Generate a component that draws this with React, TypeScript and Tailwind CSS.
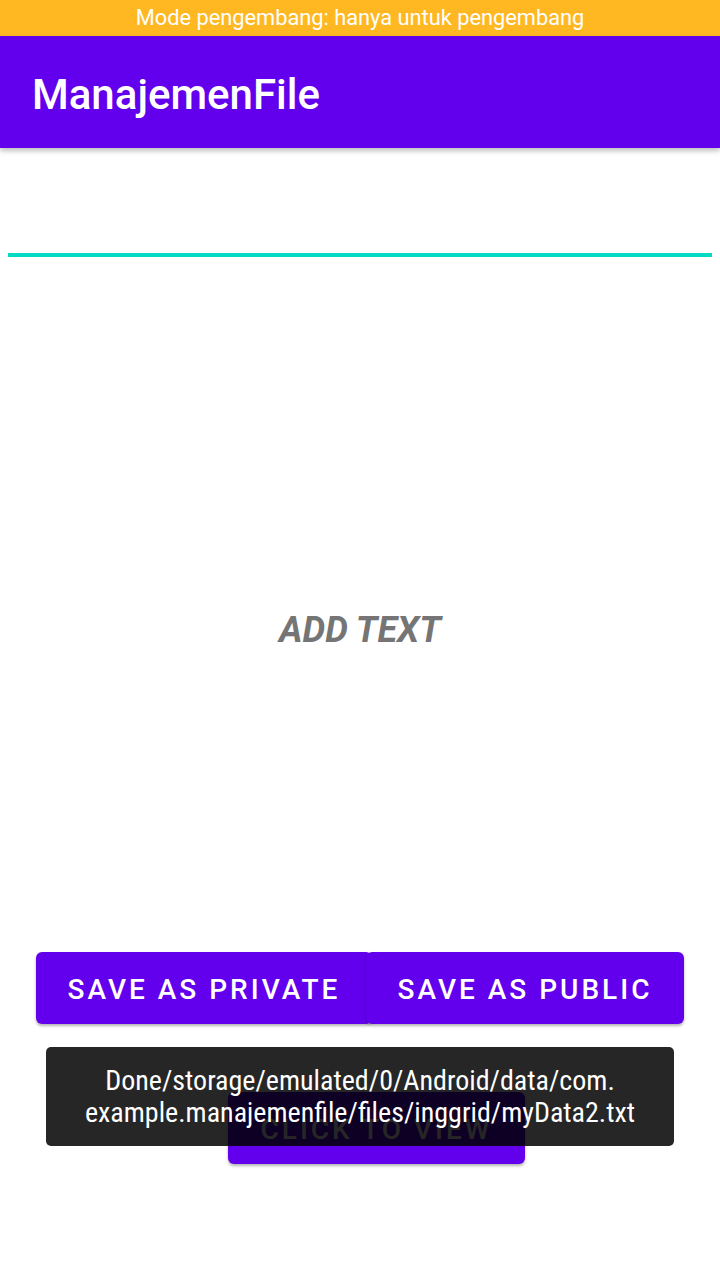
export default function App() {
  return (
    <div className="relative flex h-[1280px] w-[720px] flex-col overflow-hidden bg-white font-['Roboto',sans-serif]">
      {/* status bar */}
      <div className="flex h-[36px] items-center justify-center bg-[#FFB822] text-[21.8px] text-white">
        Mode pengembang: hanya untuk pengembang
      </div>

      {/* app bar */}
      <div className="z-10 flex h-[112px] items-center bg-[#6200EE] pl-[32px] pt-[4px] text-[42px] font-medium text-white shadow-[0_3px_5px_rgba(0,0,0,0.25)]">
        ManajemenFile
      </div>

      {/* edit text */}
      <div className="mx-[8px] h-[109px] border-b-[4px] border-[#03DAC5]" />

      {/* label */}
      <div className="mt-[352px] h-[42px] text-center text-[36px] leading-[42px] font-bold italic text-[#757575]">
        ADD TEXT
      </div>

      {/* save buttons */}
      <div className="mt-[301px] flex pl-[36px]">
        <button className="h-[72px] w-[336px] rounded-[6px] bg-[#6200EE] pt-[3px] text-[28px] font-medium tracking-[3px] text-white shadow-[0_2px_3px_rgba(0,0,0,0.3)]">
          SAVE AS PRIVATE
        </button>
        <button className="-ml-[6px] h-[72px] w-[318px] rounded-[6px] bg-[#6200EE] pt-[3px] text-[28px] font-medium tracking-[3px] text-white shadow-[0_2px_3px_rgba(0,0,0,0.3)]">
          SAVE AS PUBLIC
        </button>
      </div>

      <div className="mt-[68px] pl-[228px]">
        <button className="h-[72px] w-[297px] rounded-[6px] bg-[#6200EE] pt-[3px] text-[28px] font-medium tracking-[3px] text-white shadow-[0_2px_3px_rgba(0,0,0,0.3)]">
          CLICK TO VIEW
        </button>
      </div>

      {/* toast */}
      <div className="absolute left-[46px] top-[1047px] flex h-[99px] w-[628px] items-center justify-center rounded-[5px] bg-black/[0.85] text-center text-[28px] leading-[32px] text-white [font-stretch:condensed]">
        <div>
          Done/storage/emulated/0/Android/data/com.
          <br />
          example.manajemenfile/files/inggrid/myData2.txt
        </div>
      </div>
    </div>
  );
}
